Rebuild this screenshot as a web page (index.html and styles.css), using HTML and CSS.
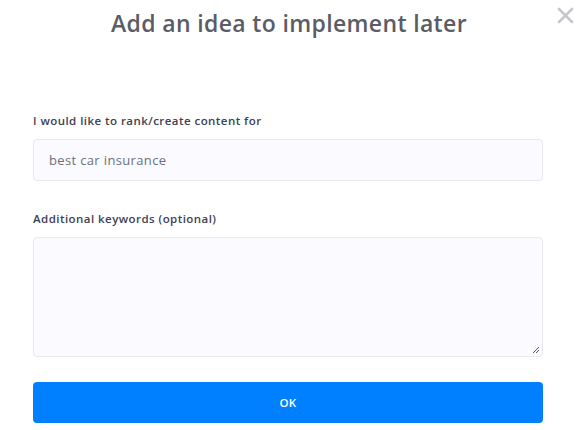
FILE: index.html
```html
<!DOCTYPE html>
<html>
<head>
<meta charset="utf-8">
<link rel="stylesheet" href="styles.css">
</head>
<body>
<div class="modal">
  <div class="header">
    <h1 class="title">Add an idea to implement later</h1>
    <button class="close" aria-label="Close">
      <svg width="17" height="17" viewBox="0 0 17 17"><path d="M2 2L15 15M15 2L2 15" stroke="#c6c7cd" stroke-width="2.6" stroke-linecap="round"/></svg>
    </button>
  </div>
  <form class="form">
    <label class="label">I would like to rank/create content for</label>
    <div class="input">best car insurance</div>
    <label class="label label-2">Additional keywords (optional)</label>
    <div class="textarea">
      <svg class="grip" width="8" height="8" viewBox="0 0 8 8"><path d="M7 1L1 7M7 4L4 7" stroke="#555" stroke-width="1"/></svg>
    </div>
    <button type="button" class="ok">OK</button>
  </form>
</div>
</body>
</html>
```
FILE: styles.css
```css
* { box-sizing: border-box; }
html, body { margin: 0; padding: 0; background: #fff; }
body { font-family: "Open Sans", "Lato", sans-serif; width: 580px; height: 430px; overflow: hidden; }
.modal { padding: 0 37px 0 33px; }
.header { position: relative; height: 105px; display: flex; justify-content: center; padding-top: 7px; }
.title { margin: 0; font-size: 23px; font-weight: 600; color: #5a5c66; line-height: 32px; margin-left: 2px; letter-spacing: 0.35px; }
.close { position: absolute; right: -31px; top: 7px; border: 0; background: none; padding: 0; width: 17px; height: 17px; display: flex; }
.form { display: flex; flex-direction: column; }
.label { font-size: 11.5px; font-weight: 600; color: #3e4152; line-height: 16px; margin-bottom: 10px; margin-top: 8px; letter-spacing: 0.45px; }
.label-2 { margin-top: 0; margin-bottom: 10px; }
.input { height: 42px; border: 1px solid #e8e8f5; background: #fafaff; border-radius: 4px; padding: 0 15px; display: flex; align-items: center; font-size: 13px; color: #6e707a; margin-bottom: 30px; letter-spacing: 0.35px; }
.textarea { position: relative; height: 120px; border: 1px solid #e8e8f5; background: #fafaff; border-radius: 4px; margin-bottom: 25px; }
.grip { position: absolute; right: 2px; bottom: 2px; }
.ok { height: 41px; background: #007fff; border: 0; border-radius: 4px; color: #fff; font-family: inherit; font-size: 11.5px; font-weight: 600; letter-spacing: 0.3px; }
```
